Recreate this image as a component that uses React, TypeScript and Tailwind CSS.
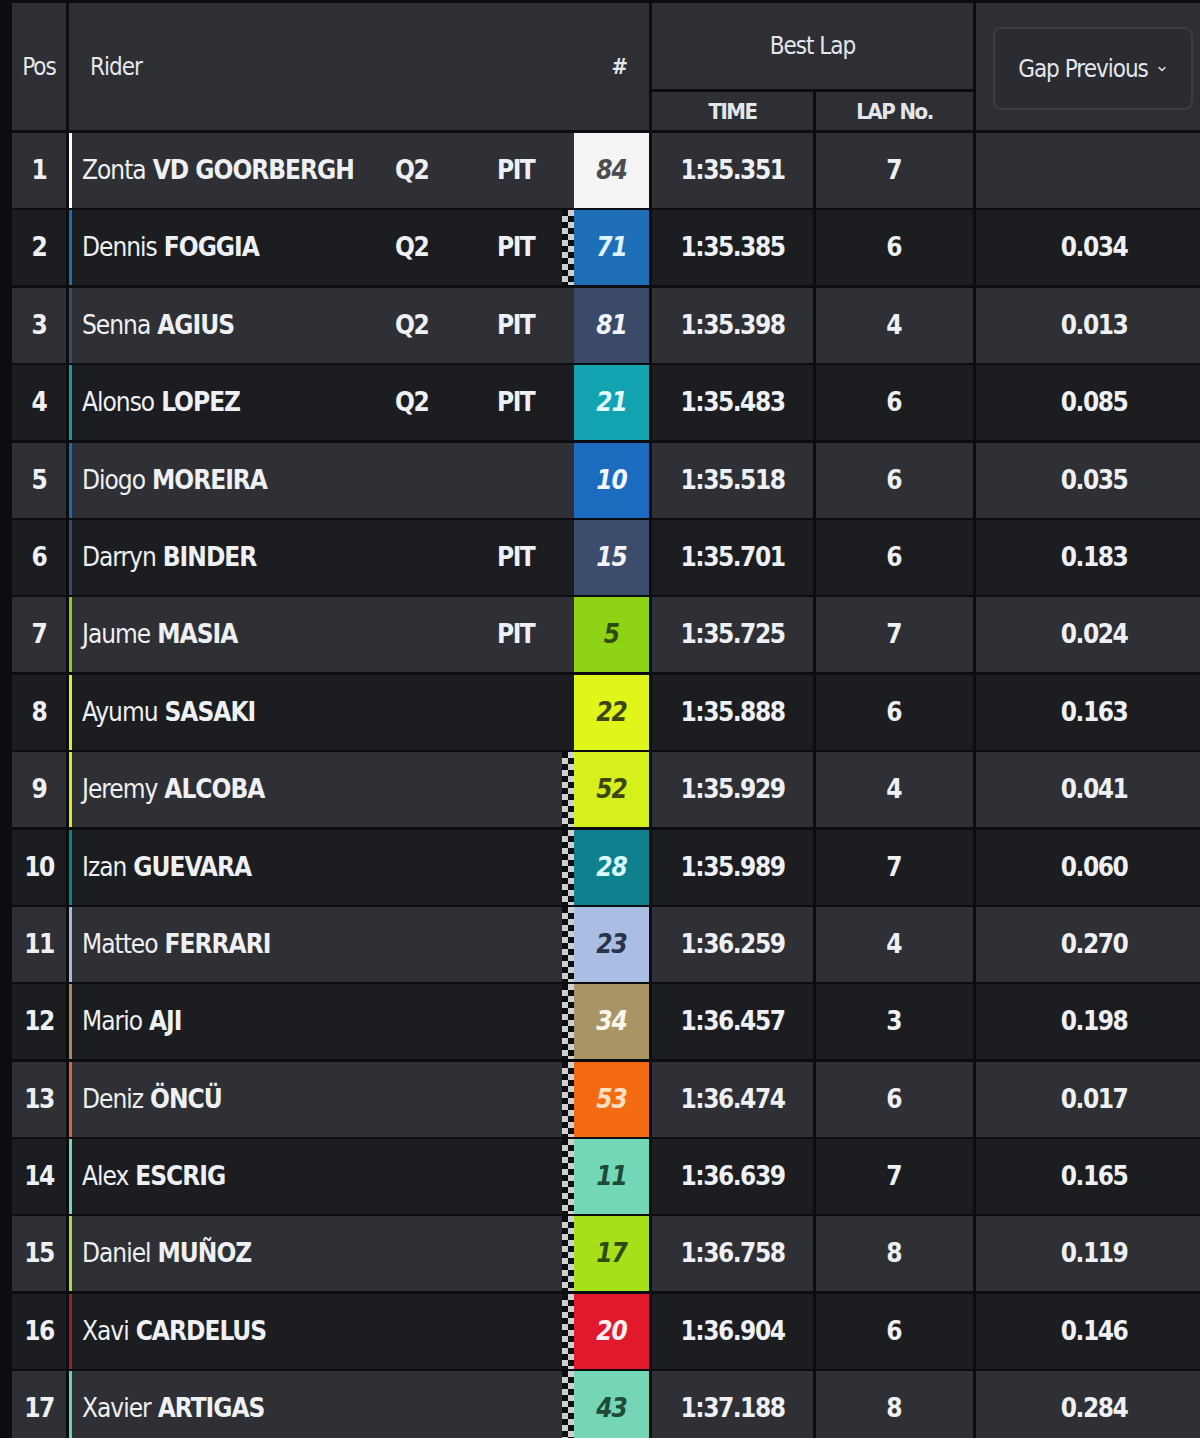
import React from 'react';

type Row = {
  pos: number;
  first: string;
  last: string;
  q2?: boolean;
  pit?: boolean;
  flag?: boolean;
  num: string;
  stripe: string;
  badge: string;
  badgeText: string;
  time: string;
  lap: number;
  gap: string;
};

const rows: Row[] = [
  { pos: 1, first: 'Zonta', last: 'VD GOORBERGH', q2: true, pit: true, num: '84', stripe: '#ffffff', badge: '#f4f4f4', badgeText: '#4a4c50', time: '1:35.351', lap: 7, gap: '' },
  { pos: 2, first: 'Dennis', last: 'FOGGIA', q2: true, pit: true, flag: true, num: '71', stripe: '#1f6bb0', badge: '#1f6fb8', badgeText: '#dff4ff', time: '1:35.385', lap: 6, gap: '0.034' },
  { pos: 3, first: 'Senna', last: 'AGIUS', q2: true, pit: true, num: '81', stripe: '#3b4b66', badge: '#3a4a68', badgeText: '#f2f4f8', time: '1:35.398', lap: 4, gap: '0.013' },
  { pos: 4, first: 'Alonso', last: 'LOPEZ', q2: true, pit: true, num: '21', stripe: '#139aa6', badge: '#12a2b0', badgeText: '#e4fbff', time: '1:35.483', lap: 6, gap: '0.085' },
  { pos: 5, first: 'Diogo', last: 'MOREIRA', num: '10', stripe: '#1c68b8', badge: '#1b6cbf', badgeText: '#f2f6ff', time: '1:35.518', lap: 6, gap: '0.035' },
  { pos: 6, first: 'Darryn', last: 'BINDER', pit: true, num: '15', stripe: '#3a4a66', badge: '#3c4c6c', badgeText: '#f2f4f8', time: '1:35.701', lap: 6, gap: '0.183' },
  { pos: 7, first: 'Jaume', last: 'MASIA', pit: true, num: '5', stripe: '#8ccf1a', badge: '#8fd414', badgeText: '#2f4a10', time: '1:35.725', lap: 7, gap: '0.024' },
  { pos: 8, first: 'Ayumu', last: 'SASAKI', num: '22', stripe: '#d9ef2a', badge: '#e0f51a', badgeText: '#3c4612', time: '1:35.888', lap: 6, gap: '0.163' },
  { pos: 9, first: 'Jeremy', last: 'ALCOBA', flag: true, num: '52', stripe: '#d4ec20', badge: '#d6f01c', badgeText: '#3c4612', time: '1:35.929', lap: 4, gap: '0.041' },
  { pos: 10, first: 'Izan', last: 'GUEVARA', flag: true, num: '28', stripe: '#107f8c', badge: '#0f808e', badgeText: '#d8fbff', time: '1:35.989', lap: 7, gap: '0.060' },
  { pos: 11, first: 'Matteo', last: 'FERRARI', flag: true, num: '23', stripe: '#a6b9dc', badge: '#a9bee2', badgeText: '#26334a', time: '1:36.259', lap: 4, gap: '0.270' },
  { pos: 12, first: 'Mario', last: 'AJI', flag: true, num: '34', stripe: '#a08d62', badge: '#a99466', badgeText: '#fbf6ea', time: '1:36.457', lap: 3, gap: '0.198' },
  { pos: 13, first: 'Deniz', last: 'ÖNCÜ', flag: true, num: '53', stripe: '#d8663a', badge: '#f46a12', badgeText: '#ffe0c4', time: '1:36.474', lap: 6, gap: '0.017' },
  { pos: 14, first: 'Alex', last: 'ESCRIG', flag: true, num: '11', stripe: '#78d4b8', badge: '#72d8b8', badgeText: '#1f4a36', time: '1:36.639', lap: 7, gap: '0.165' },
  { pos: 15, first: 'Daniel', last: 'MUÑOZ', flag: true, num: '17', stripe: '#a7dc3a', badge: '#a6e01a', badgeText: '#2c4a12', time: '1:36.758', lap: 8, gap: '0.119' },
  { pos: 16, first: 'Xavi', last: 'CARDELUS', flag: true, num: '20', stripe: '#a01a28', badge: '#e01a2c', badgeText: '#fff0f2', time: '1:36.904', lap: 6, gap: '0.146' },
  { pos: 17, first: 'Xavier', last: 'ARTIGAS', flag: true, num: '43', stripe: '#6fcfb0', badge: '#74d6b6', badgeText: '#1f4a36', time: '1:37.188', lap: 8, gap: '0.284' },
];

// chequered flag strip next to the number badge
const Checker: React.FC = () => (
  <div className="h-full w-[12px] bg-[image:repeating-conic-gradient(#cfcfcf_0_25%,#0e0f12_0_50%)] bg-size-[12px_12px]" />
);

const App: React.FC = () => {
  return (
    <div className="w-[1200px] h-[1438px] overflow-hidden bg-[#0c0d10] pl-[12px] pt-[3px] font-['DejaVu_Sans_Condensed','Liberation_Sans_Narrow','Liberation_Sans',sans-serif] text-[#eef0f3]">
      {/* Header */}
      <div className="flex h-[127px] gap-[3px] text-[24px] text-[#e4e7ea]">
        <div className="w-[54px] bg-[#2d2f34] flex items-center justify-center tracking-[-1px]">Pos</div>
        <div className="w-[580px] bg-[#2d2f34] flex items-center pl-[21px] pr-[22px] tracking-[-1px]">
          <span className="flex-1">Rider</span>
          <span className="font-bold text-[22px]">#</span>
        </div>
        <div className="w-[321px] flex flex-col gap-[3px]">
          <div className="h-[86px] bg-[#2d2f34] flex items-center justify-center tracking-[-1px]">Best Lap</div>
          <div className="flex-1 flex gap-[3px] text-[22px] font-bold">
            <div className="w-[161px] bg-[#2d2f34] flex items-center justify-center tracking-[-1.5px]">TIME</div>
            <div className="w-[157px] bg-[#2d2f34] flex items-center justify-center tracking-[-1.5px]">LAP No.</div>
          </div>
        </div>
        <div className="flex-1 bg-[#2d2f34] pl-[17px] pr-[7px] pt-[24px] pb-[20px]">
          <div className="h-full rounded-[8px] border-2 border-[#3a3d43] bg-[#2a2c31] flex items-center justify-center gap-[8px] tracking-[-1px]">
            <span>Gap Previous</span>
            <svg width="12" height="12" viewBox="0 0 12 12" fill="none" stroke="#d8dbe0" strokeWidth="1.6" strokeLinecap="round" strokeLinejoin="round">
              <path d="M3 4.5 L6 7.5 L9 4.5" />
            </svg>
          </div>
        </div>
      </div>

      {/* Rows */}
      <div className="flex flex-col gap-[2.4px] pt-[3px]">
        {rows.map((r, i) => {
          const bg = i % 2 === 0 ? 'bg-[#2e3035]' : 'bg-[#1b1d21]';
          return (
            <div key={r.pos} className="flex h-[75px] gap-[3px] text-[26px]">
              <div className={`w-[54px] ${bg} flex items-center justify-center font-bold tracking-[-1.5px]`}>{r.pos}</div>
              <div className={`w-[580px] ${bg} flex items-stretch`}>
                <div className="w-[3px]" style={{ backgroundColor: r.stripe }} />
                <div className="w-[323px] pl-[10px] flex items-center whitespace-nowrap tracking-[-1px]">
                  <span>{r.first}</span>
                  <span className="font-bold ml-[7px]">{r.last}</span>
                </div>
                <div className="w-[102px] flex items-center font-bold tracking-[-1.5px]">{r.q2 ? 'Q2' : ''}</div>
                <div className="w-[63px] flex items-center font-bold tracking-[-1.5px]">{r.pit ? 'PIT' : ''}</div>
                <div className="w-[14px] flex justify-end">{r.flag ? <Checker /> : null}</div>
                <div
                  className="w-[75px] flex items-center justify-center font-bold italic tracking-[-1px]"
                  style={{ backgroundColor: r.badge, color: r.badgeText }}
                >
                  {r.num}
                </div>
              </div>
              <div className={`w-[161px] ${bg} flex items-center justify-center font-bold tracking-[-1.5px]`}>{r.time}</div>
              <div className={`w-[157px] ${bg} flex items-center justify-center font-bold`}>{r.lap}</div>
              <div className={`flex-1 ${bg} flex items-center justify-center pl-[12px] font-bold tracking-[-1.5px]`}>{r.gap}</div>
            </div>
          );
        })}
      </div>
    </div>
  );
};

export default App;
